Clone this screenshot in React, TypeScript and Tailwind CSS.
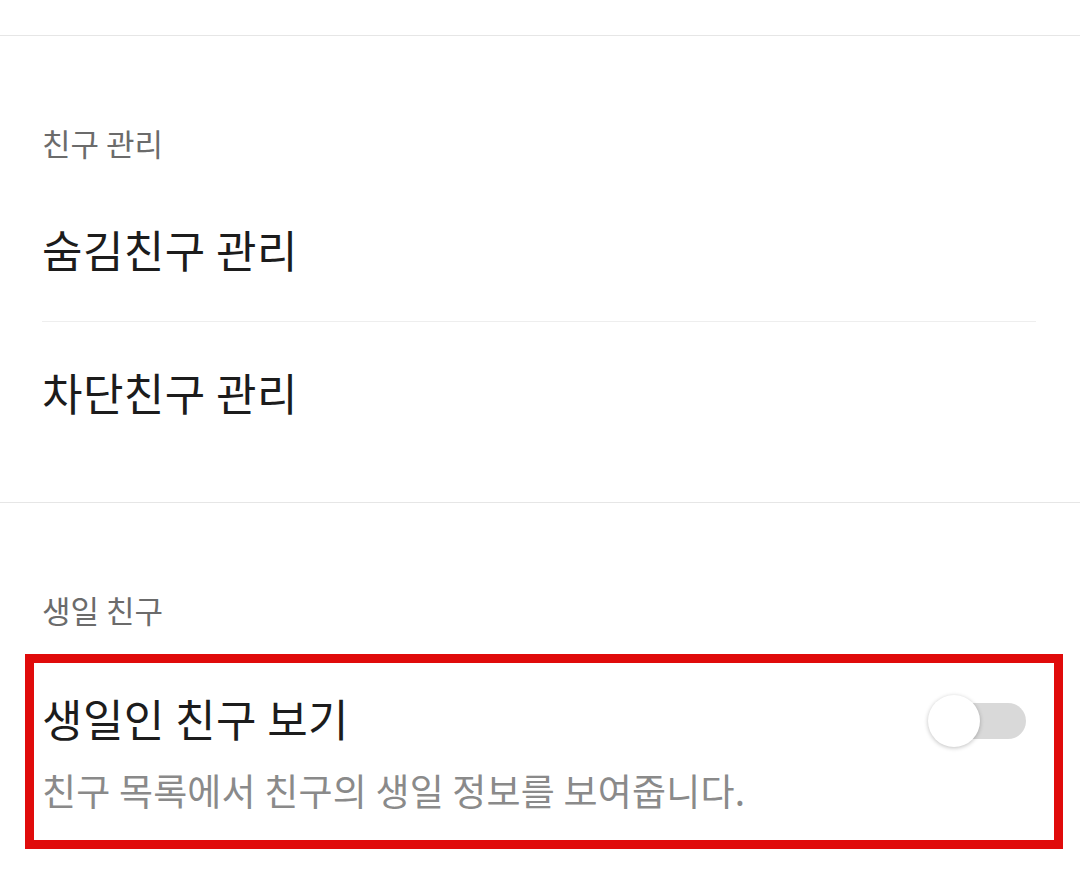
import { useState } from 'react';

const font = { fontFamily: '"Noto Sans CJK KR", "Noto Sans", sans-serif' };

const SectionTitle = ({ children }: { children: string }) => (
  <div className="px-[42px] text-[31px] leading-none text-[#6b6b6b]">{children}</div>
);

const MenuItem = ({ label }: { label: string }) => (
  <div className="text-[44px] leading-none tracking-[0.01em] text-[#1c1c1c]">{label}</div>
);

const App = () => {
  const [birthdayOn, setBirthdayOn] = useState(false);

  return (
    <div className="w-[1080px] h-[882px] bg-white overflow-hidden" style={font}>
      <div className="h-[35px]" />
      <div className="h-px bg-[#e6e6e6]" />

      {/* friend management */}
      <div className="pt-[91px]">
        <SectionTitle>친구 관리</SectionTitle>
        <div className="px-[42px] pt-[69px]">
          <MenuItem label="숨김친구 관리" />
          <div className="h-px bg-[#eeeeee] mt-[50px] mr-[2px]" />
          <div className="pt-[48px]">
            <MenuItem label="차단친구 관리" />
          </div>
        </div>
      </div>
      <div className="h-px bg-[#e6e6e6] mt-[88px]" />

      {/* birthday */}
      <div className="pt-[91px]">
        <SectionTitle>생일 친구</SectionTitle>
        <div className="ml-[25px] mr-[17px] mt-[29px] border-[9px] border-[#e00b0b] h-[195px] px-[8px] pt-[33px]">
          <div className="flex items-start justify-between">
            <MenuItem label="생일인 친구 보기" />
            <button
              onClick={() => setBirthdayOn(!birthdayOn)}
              className="relative w-[98px] h-[52px] mr-[20px] -mt-[1px]"
            >
              <span
                className={`absolute right-0 top-[8px] h-[36px] w-[90px] rounded-full ${birthdayOn ? 'bg-[#fee500]' : 'bg-[#d9d9d9]'}`}
              />
              <span
                className={`absolute top-0 h-[52px] w-[52px] rounded-full bg-white shadow-[0_1px_4px_rgba(0,0,0,0.25)] ${birthdayOn ? 'right-0' : 'left-0'}`}
              />
            </button>
          </div>
          <div className="mt-[25px] text-[37px] leading-none tracking-[0.005em] text-[#8a8a8a]">
            친구 목록에서 친구의 생일 정보를 보여줍니다.
          </div>
        </div>
      </div>
    </div>
  );
};

export default App;
